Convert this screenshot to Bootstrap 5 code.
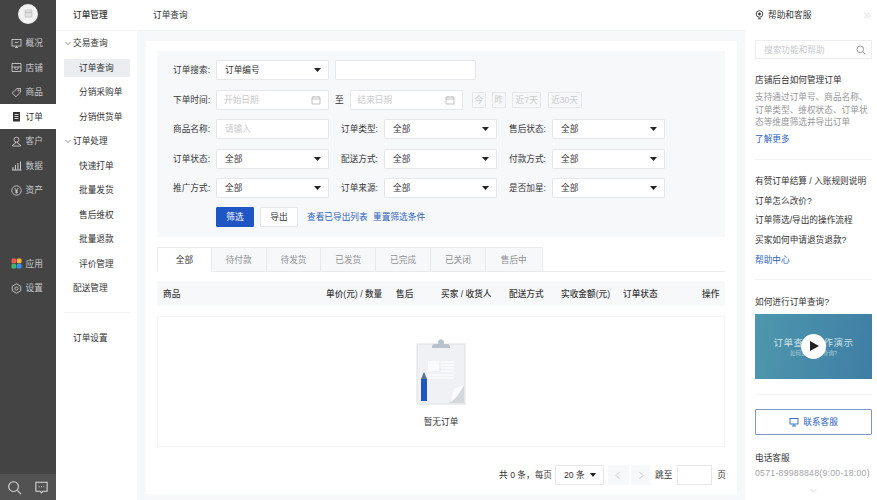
<!DOCTYPE html>
<html lang="zh">
<head>
<meta charset="utf-8">
<title>订单查询</title>
<link href="https://cdn.jsdelivr.net/npm/bootstrap@5.3.0/dist/css/bootstrap.min.css" rel="stylesheet">
<style>
html,body{height:500px;overflow:hidden}
body{background:#f7f8fa;color:#323233;font:8.67px/12px "Liberation Sans","Noto Sans CJK SC",sans-serif;width:877px}
.shell{height:500px}
.rail{width:56px;background:#444;color:#c8c9cc;flex:none}
.rail-logo{height:30.75px}
.rail-logo span{width:20px;height:20px;border-radius:50%;background:#f2f2f2;margin-top:-3px}
.rail-item{height:24.5px;padding-left:11px;gap:3.5px}
.rail-item svg{width:11px;height:11px;flex:none}
.rail-item.on{background:#fff;color:#323233}
.rail-gap{margin-top:49px}
.rail-foot{height:26px;background:#525252;padding:0 7px}
.rail-foot svg{width:15px;height:15px}
.subnav{width:81px;background:#fff;flex:none}
.subnav-head{height:31px;padding-left:17px;font-weight:500;border-bottom:1px solid #f2f3f5}
.sub-a{height:24.5px;padding-left:17px;position:relative;flex:none}
.sub-a svg{position:absolute;left:9px;top:10px;width:6px;height:5px}
.sub-b{height:18px;margin:3.25px 7px 3.25px 8px;padding-left:15px;flex:none}
.sub-b.on{background:#ebedf0}
.sub-line{border-top:1px solid #f2f3f5;margin:11.5px 7px 13px 8px}
.mainc{width:608px;flex:none}
.mainc-head{height:31px;background:#fff;padding-left:16px;border-bottom:1px solid #f2f3f5}
.pane{margin:10px 8px 6px 9px;background:#fff;height:453px;padding:10px 12px 0 11px}
.filters{height:186px;background:#f7f8fa;padding:9.4px 0 0 16px;gap:9.4px}
.frow{height:20px;gap:0}
.flabel{width:43px;flex:none;color:#39393a}
.flabel2{width:55px;flex:none;text-align:right;padding-right:6px;color:#39393a}
.box{width:113px;height:20px;flex:none;font-size:8.67px;line-height:12px;border:1px solid #e6e7ea;border-radius:1px;background-color:#fff;color:#323233;padding:0 8px;box-shadow:none}
select.box{background-size:7px 4px;background-position:right 7px center;background-image:url("data:image/svg+xml,%3Csvg xmlns='http://www.w3.org/2000/svg' viewBox='0 0 7 4'%3E%3Cpath d='M0 0h7L3.5 4z' fill='%23222'/%3E%3C/svg%3E")}
.box::placeholder{color:#c8c9cc}
.box-ph{color:#c8c9cc;padding:0 7px}
.box-ph svg{width:10px;height:10px}
.wide{width:141px;margin-left:5.5px}
.date-to{margin:0 5.5px 0 6px;width:9px;flex:none}
.tag{height:16px;padding:0 2.5px;justify-content:center;border:1px solid #e6e7ea;color:#c8c9cc;margin-right:6.5px;border-radius:1px;white-space:nowrap}
.tag-one{width:13.5px;padding:0}
.tag-first{margin-left:9.5px}
.act{width:38px;height:20px;font-size:8.67px;padding:0;border-radius:1px;line-height:18px;margin-right:6px}
.act-main{background:#2056c4;border-color:#2056c4;color:#fff}
.act-main:hover{background:#2056c4;color:#fff}
.act-sub{background:#fff;border-color:#e6e7ea;color:#323233}
.lnk{color:#2b62bd;text-decoration:none}
.lnk-a{margin:0 5.5px 0 3px}
.tabset{margin-top:10px;height:25px;border-bottom:1px solid #e9eaec}
.tabi{width:54.8px;height:25px;background:#f7f8fa;border:1px solid #e9eaec;border-left:0;color:#8f9093;font-size:8.67px}
.tabi.first{background:#fff;color:#323233;border-left:1px solid #e9eaec;border-bottom-color:#fff}
.tabi.last{width:57px}
.thead-row{margin-top:9px;height:25px;background:#f7f8fa;padding-left:6px;font-weight:500;display:grid;grid-template-columns:163px 70px 45px 68px 52px 62px 79px 23px;align-items:center;white-space:nowrap;color:#39393a}
.emptybox{margin-top:10px;height:131px;border:1px solid #f2f3f5;padding-top:20px}
.emptybox svg{width:52px;height:70px;display:block;margin:0 auto}
.emptybox div{margin-top:9px;color:#39393a}
.pager{margin:18px -1px 0 0;height:20px}
.pg-sel{width:49px;margin:0 4px 0 3px;padding:0 7px 0 8px;border:1px solid #e6e7ea}
.pg-sel svg{width:6px;height:4px}
.pg-btn{width:20.5px;height:20px;background:#f7f8fa;margin-right:2px}
.pg-btn svg{width:8px;height:9px}
.pg-jump{margin-left:2px}
.pg-input{width:35px;height:20px;border:1px solid #e6e7ea;margin:0 5px}
.helpbar{width:132px;background:#fff;flex:none}
.help-head{height:31px;padding:0 6px 0 10px;border-bottom:1px solid #fff}
.help-head svg.pin{width:9px;height:10px;margin-right:4px}
.help-body{padding:9px 5px 0 10px}
.help-search{height:19px;border:1px solid #ebedf0;padding:0 5px 0 8px;color:#c8c9cc}
.help-search svg{width:10px;height:10px}
.help-title{margin-top:15px}
.help-text{margin-top:5px;color:#969799;line-height:12.5px}
.help-more{margin-top:4px}
.help-line{border-top:1px solid #f2f3f5}
.line-a{margin-top:14px}
.help-links{padding-top:11.5px}
.help-links div{height:19.7px;display:flex;align-items:center}
.line-b{margin-top:9.5px}
.video-q{margin-top:16px}
.video{height:65.5px;margin-top:6px;background:linear-gradient(100deg,#4e97ad,#3f7ea5);color:#cfe3ea;overflow:hidden;position:relative}
.video b{font-size:9.5px;font-weight:400;letter-spacing:.5px;line-height:12px;white-space:nowrap}
.video small{font-size:5.5px;line-height:8px;white-space:nowrap;color:#a9cbd9}
.play{position:absolute;left:46px;top:20px;width:25px;height:25px;border-radius:50%;background:#fff}
.play svg{width:9px;height:10px;margin-left:2px}
.line-c{margin-top:14.5px}
.contact{height:26px;margin-top:14px;border:1px solid #7f97c7;border-radius:1px;color:#2b62bd;gap:4px}
.contact svg{width:10px;height:10px}
.tel-t{margin-top:17px}
.tel{margin-top:3px;color:#a3a4a7;letter-spacing:.28px;white-space:nowrap}
.tel-more{margin-top:5px;text-align:center}
</style>
</head>
<body>
<div class="shell d-flex">
  <nav class="rail d-flex flex-column">
    <div class="rail-logo d-flex align-items-center justify-content-center"><span class="d-flex align-items-center justify-content-center"><svg width="9" height="9" viewBox="0 0 9 9"><path d="M1 1h7v7H1z" fill="#e0e0e0" stroke="#bbb" stroke-width=".6"/><path d="M1 3.5h7" stroke="#aaa" stroke-width=".6"/></svg></span></div>
    <div class="rail-item d-flex align-items-center"><svg viewBox="0 0 11 11" fill="none" stroke="#c8c9cc" stroke-width=".9"><rect x="1" y="1.5" width="9" height="6.5"/><path d="M4 9.5h3M5.5 8v1.5M3.5 5l1.5-1 1 1 1.5-1.3"/></svg>概况</div>
    <div class="rail-item d-flex align-items-center"><svg viewBox="0 0 11 11" fill="none" stroke="#c8c9cc" stroke-width=".9"><path d="M1 1.5h9v8H1zM1 5h9M4 5v1.5a1.5 1 0 0 0 3 0V5"/></svg>店铺</div>
    <div class="rail-item d-flex align-items-center"><svg viewBox="0 0 11 11" fill="none" stroke="#c8c9cc" stroke-width=".9"><path d="M6 1.5h3.5V5L5 9.8 1.2 6z"/><circle cx="7.5" cy="3.5" r=".6"/></svg>商品</div>
    <div class="rail-item on d-flex align-items-center"><svg viewBox="0 0 11 11"><path d="M2 1h7v9.5H2z" fill="#323233"/><path d="M3.5 3.5h4M3.5 5.5h4M3.5 7.5h4" stroke="#fff" stroke-width=".8"/></svg>订单</div>
    <div class="rail-item d-flex align-items-center"><svg viewBox="0 0 11 11" fill="none" stroke="#c8c9cc" stroke-width=".9"><circle cx="5.5" cy="3.7" r="2.5"/><path d="M4.5 6v1.2L1.5 9v1h8V9L6.5 7.2V6"/></svg>客户</div>
    <div class="rail-item d-flex align-items-center"><svg viewBox="0 0 11 11" fill="none" stroke="#c8c9cc" stroke-width="1"><path d="M1 10h9.5M2 10V7M4.5 10V5M7 10V3M9.5 10V1.5"/></svg>数据</div>
    <div class="rail-item d-flex align-items-center"><svg viewBox="0 0 11 11" fill="none" stroke="#c8c9cc" stroke-width=".9"><circle cx="5.5" cy="5.5" r="4.7"/><path d="M3.8 3l1.7 2.5L7.2 3M5.5 5.5V8.5M4 5.8h3M4 7.2h3"/></svg>资产</div>
    <div class="rail-item rail-gap d-flex align-items-center"><svg viewBox="0 0 11 11"><rect x=".5" y=".5" width="4.7" height="4.7" rx="1.2" fill="#ef5b4f"/><rect x="5.8" y=".5" width="4.7" height="4.7" rx="1.2" fill="#f5b43c"/><rect x=".5" y="5.8" width="4.7" height="4.7" rx="1.2" fill="#3fb56f"/><rect x="5.8" y="5.8" width="4.7" height="4.7" rx="1.2" fill="#3e90e8"/></svg>应用</div>
    <div class="rail-item d-flex align-items-center"><svg viewBox="0 0 11 11" fill="none" stroke="#c8c9cc" stroke-width=".9"><path d="M5.5.8l4.2 2.4v4.6L5.5 10.2 1.3 7.8V3.2z"/><circle cx="5.5" cy="5.5" r="1.6"/></svg>设置</div>
    <div class="rail-foot mt-auto d-flex align-items-center justify-content-between"><svg viewBox="0 0 16 16" fill="none" stroke="#dcdcdc" stroke-width="1.1"><circle cx="7" cy="7" r="5.2"/><path d="M11 11l4 4"/></svg><svg viewBox="0 0 16 16" fill="none" stroke="#dcdcdc" stroke-width="1.1"><path d="M2 2.5h12v9.5H9.5L8 13.8 6.5 12H2z"/><path d="M5 7.2h1M7.5 7.2h1M10 7.2h1"/></svg></div>
  </nav>

  <aside class="subnav d-flex flex-column">
    <div class="subnav-head d-flex align-items-center">订单管理</div>
    <div class="sub-a d-flex align-items-center"><svg viewBox="0 0 6 5" fill="none" stroke="#777" stroke-width=".8"><path d="M.5 1L3 3.7 5.5 1"/></svg>交易查询</div>
    <div class="sub-b on d-flex align-items-center">订单查询</div>
    <div class="sub-b d-flex align-items-center">分销采购单</div>
    <div class="sub-b d-flex align-items-center">分销供货单</div>
    <div class="sub-a d-flex align-items-center"><svg viewBox="0 0 6 5" fill="none" stroke="#777" stroke-width=".8"><path d="M.5 1L3 3.7 5.5 1"/></svg>订单处理</div>
    <div class="sub-b d-flex align-items-center">快速打单</div>
    <div class="sub-b d-flex align-items-center">批量发货</div>
    <div class="sub-b d-flex align-items-center">售后维权</div>
    <div class="sub-b d-flex align-items-center">批量退款</div>
    <div class="sub-b d-flex align-items-center">评价管理</div>
    <div class="sub-a d-flex align-items-center">配送管理</div>
    <div class="sub-line"></div>
    <div class="sub-a d-flex align-items-center">订单设置</div>
  </aside>

  <main class="mainc">
    <div class="mainc-head d-flex align-items-center">订单查询</div>
    <div class="pane">
      <div class="filters d-flex flex-column">
        <div class="frow d-flex align-items-center">
          <span class="flabel">订单搜索:</span>
          <select class="form-select box"><option>订单编号</option></select>
          <input class="form-control box wide" type="text" aria-label="搜索内容">
        </div>
        <div class="frow d-flex align-items-center">
          <span class="flabel">下单时间:</span>
          <div class="box box-ph d-flex align-items-center justify-content-between">开始日期<svg viewBox="0 0 10 10" fill="none" stroke="#aaa" stroke-width=".7"><path d="M1 2h8v7H1zM1 4h8M3 1v1.5M7 1v1.5"/></svg></div>
          <span class="date-to">至</span>
          <div class="box box-ph d-flex align-items-center justify-content-between">结束日期<svg viewBox="0 0 10 10" fill="none" stroke="#aaa" stroke-width=".7"><path d="M1 2h8v7H1zM1 4h8M3 1v1.5M7 1v1.5"/></svg></div>
          <span class="tag tag-one tag-first d-flex align-items-center">今</span><span class="tag tag-one d-flex align-items-center">昨</span><span class="tag d-flex align-items-center">近7天</span><span class="tag d-flex align-items-center">近30天</span>
        </div>
        <div class="frow d-flex align-items-center">
          <span class="flabel">商品名称:</span>
          <input class="form-control box" type="text" placeholder="请输入">
          <span class="flabel2">订单类型:</span>
          <select class="form-select box"><option>全部</option></select>
          <span class="flabel2">售后状态:</span>
          <select class="form-select box"><option>全部</option></select>
        </div>
        <div class="frow d-flex align-items-center">
          <span class="flabel">订单状态:</span>
          <select class="form-select box"><option>全部</option></select>
          <span class="flabel2">配送方式:</span>
          <select class="form-select box"><option>全部</option></select>
          <span class="flabel2">付款方式:</span>
          <select class="form-select box"><option>全部</option></select>
        </div>
        <div class="frow d-flex align-items-center">
          <span class="flabel">推广方式:</span>
          <select class="form-select box"><option>全部</option></select>
          <span class="flabel2">订单来源:</span>
          <select class="form-select box"><option>全部</option></select>
          <span class="flabel2">是否加星:</span>
          <select class="form-select box"><option>全部</option></select>
        </div>
        <div class="frow d-flex align-items-center">
          <span class="flabel"></span>
          <button class="btn act act-main" type="button">筛选</button>
          <button class="btn act act-sub" type="button">导出</button>
          <a class="lnk lnk-a" href="#">查看已导出列表</a>
          <a class="lnk" href="#">重置筛选条件</a>
        </div>
      </div>

      <div class="tabset d-flex">
        <div class="tabi first d-flex align-items-center justify-content-center">全部</div>
        <div class="tabi d-flex align-items-center justify-content-center">待付款</div>
        <div class="tabi d-flex align-items-center justify-content-center">待发货</div>
        <div class="tabi d-flex align-items-center justify-content-center">已发货</div>
        <div class="tabi d-flex align-items-center justify-content-center">已完成</div>
        <div class="tabi d-flex align-items-center justify-content-center">已关闭</div>
        <div class="tabi last d-flex align-items-center justify-content-center">售后中</div>
      </div>

      <div class="thead-row">
        <span>商品</span><span>单价(元) / 数量</span><span>售后</span><span>买家 / 收货人</span><span>配送方式</span><span>实收金额(元)</span><span>订单状态</span><span>操作</span>
      </div>

      <div class="emptybox text-center">
        <svg viewBox="0 0 52 70">
          <rect x="2" y="7" width="48" height="60" fill="#eff1f4" stroke="#dcdfe3"/>
          <path d="M17 10a3 3 0 0 1 3-3h3.5a3 3 0 1 1 5 0H32a3 3 0 0 1 3 3v1H17z" fill="#b9c2cc"/>
          <rect x="13" y="24" width="11" height="10" fill="#fafbfc"/>
          <path d="M26 25h13M26 28h13M26 31h13M26 34h13M13 38h26M13 41h26" stroke="#fafbfc" stroke-width="1.3"/>
          <path d="M34 66l15-18v18z" fill="#d4d7db"/>
          <path d="M34 66c4-2 3-10 5-14l10-4c-4 8-9 15-15 18z" fill="#fafbfc"/>
          <rect x="6" y="42" width="6" height="22" fill="#2056c4"/>
          <path d="M6 42l3-7 3 7z" fill="#5f6f85"/>
        </svg>
        <div>暂无订单</div>
      </div>

      <div class="pager d-flex align-items-center justify-content-end">
        <span>共 0 条&#65292;每页</span>
        <div class="pg-sel d-flex align-items-center justify-content-between box">20 条<svg viewBox="0 0 6 4"><path d="M0 0h6L3 4z" fill="#222"/></svg></div>
        <div class="pg-btn d-flex align-items-center justify-content-center"><svg viewBox="0 0 8 9" fill="none" stroke="#c8c9cc"><path d="M5.5 1L2 4.5 5.5 8"/></svg></div>
        <div class="pg-btn d-flex align-items-center justify-content-center"><svg viewBox="0 0 8 9" fill="none" stroke="#c8c9cc"><path d="M2.5 1L6 4.5 2.5 8"/></svg></div>
        <span class="pg-jump">跳至</span>
        <div class="pg-input"></div>
        <span>页</span>
      </div>
    </div>
  </main>

  <aside class="helpbar">
    <div class="help-head d-flex align-items-center"><svg class="pin" viewBox="0 0 9 10" fill="none" stroke="#323233" stroke-width=".9"><circle cx="4.5" cy="4" r="3.3"/><circle cx="4.5" cy="4" r="1" fill="#323233"/><path d="M3 8.8h3"/></svg>帮助和客服<svg class="ms-auto" width="7" height="7" viewBox="0 0 7 7" fill="none" stroke="#c8c9cc" stroke-width=".8"><path d="M.5 1L3 3.5.5 6M3.5 1L6 3.5 3.5 6"/></svg></div>
    <div class="help-body">
      <div class="help-search d-flex align-items-center justify-content-between">搜索功能和帮助<svg viewBox="0 0 10 10" fill="none" stroke="#8a8b8d" stroke-width=".9"><circle cx="4.3" cy="4.3" r="3.3"/><path d="M6.8 6.8L9.3 9.3"/></svg></div>
      <div class="help-title">店铺后台如何管理订单</div>
      <div class="help-text">支持通过订单号、商品名称、订单类型、维权状态、订单状态等维度筛选并导出订单</div>
      <div class="help-more"><a class="lnk" href="#">了解更多</a></div>
      <div class="help-line line-a"></div>
      <div class="help-links">
        <div>有赞订单结算 / 入账规则说明</div>
        <div>订单怎么改价?</div>
        <div>订单筛选/导出的操作流程</div>
        <div>买家如何申请退货退款?</div>
        <div><a class="lnk" href="#">帮助中心</a></div>
      </div>
      <div class="help-line line-b"></div>
      <div class="video-q">如何进行订单查询?</div>
      <div class="video d-flex flex-column align-items-center justify-content-center">
        <b>订单查询操作演示</b><small>如何进行订单查询?</small>
        <div class="play d-flex align-items-center justify-content-center"><svg viewBox="0 0 9 10"><path d="M0 0l9 5-9 5z" fill="#222"/></svg></div>
      </div>
      <div class="help-line line-c"></div>
      <div class="contact d-flex align-items-center justify-content-center"><svg viewBox="0 0 10 10" fill="none" stroke="#2b62bd" stroke-width=".9"><rect x="1" y="1.5" width="8" height="5.5"/><path d="M3 9h4M5 7v2"/></svg>联系客服</div>
      <div class="tel-t">电话客服</div>
      <div class="tel">0571-89988848(9:00-18:00)</div>
      <div class="tel-more"><svg width="7" height="5" viewBox="0 0 7 5" fill="none" stroke="#c8c9cc" stroke-width=".8"><path d="M.5 1l3 3 3-3"/></svg></div>
    </div>
  </aside>
</div>
</body>
</html>
